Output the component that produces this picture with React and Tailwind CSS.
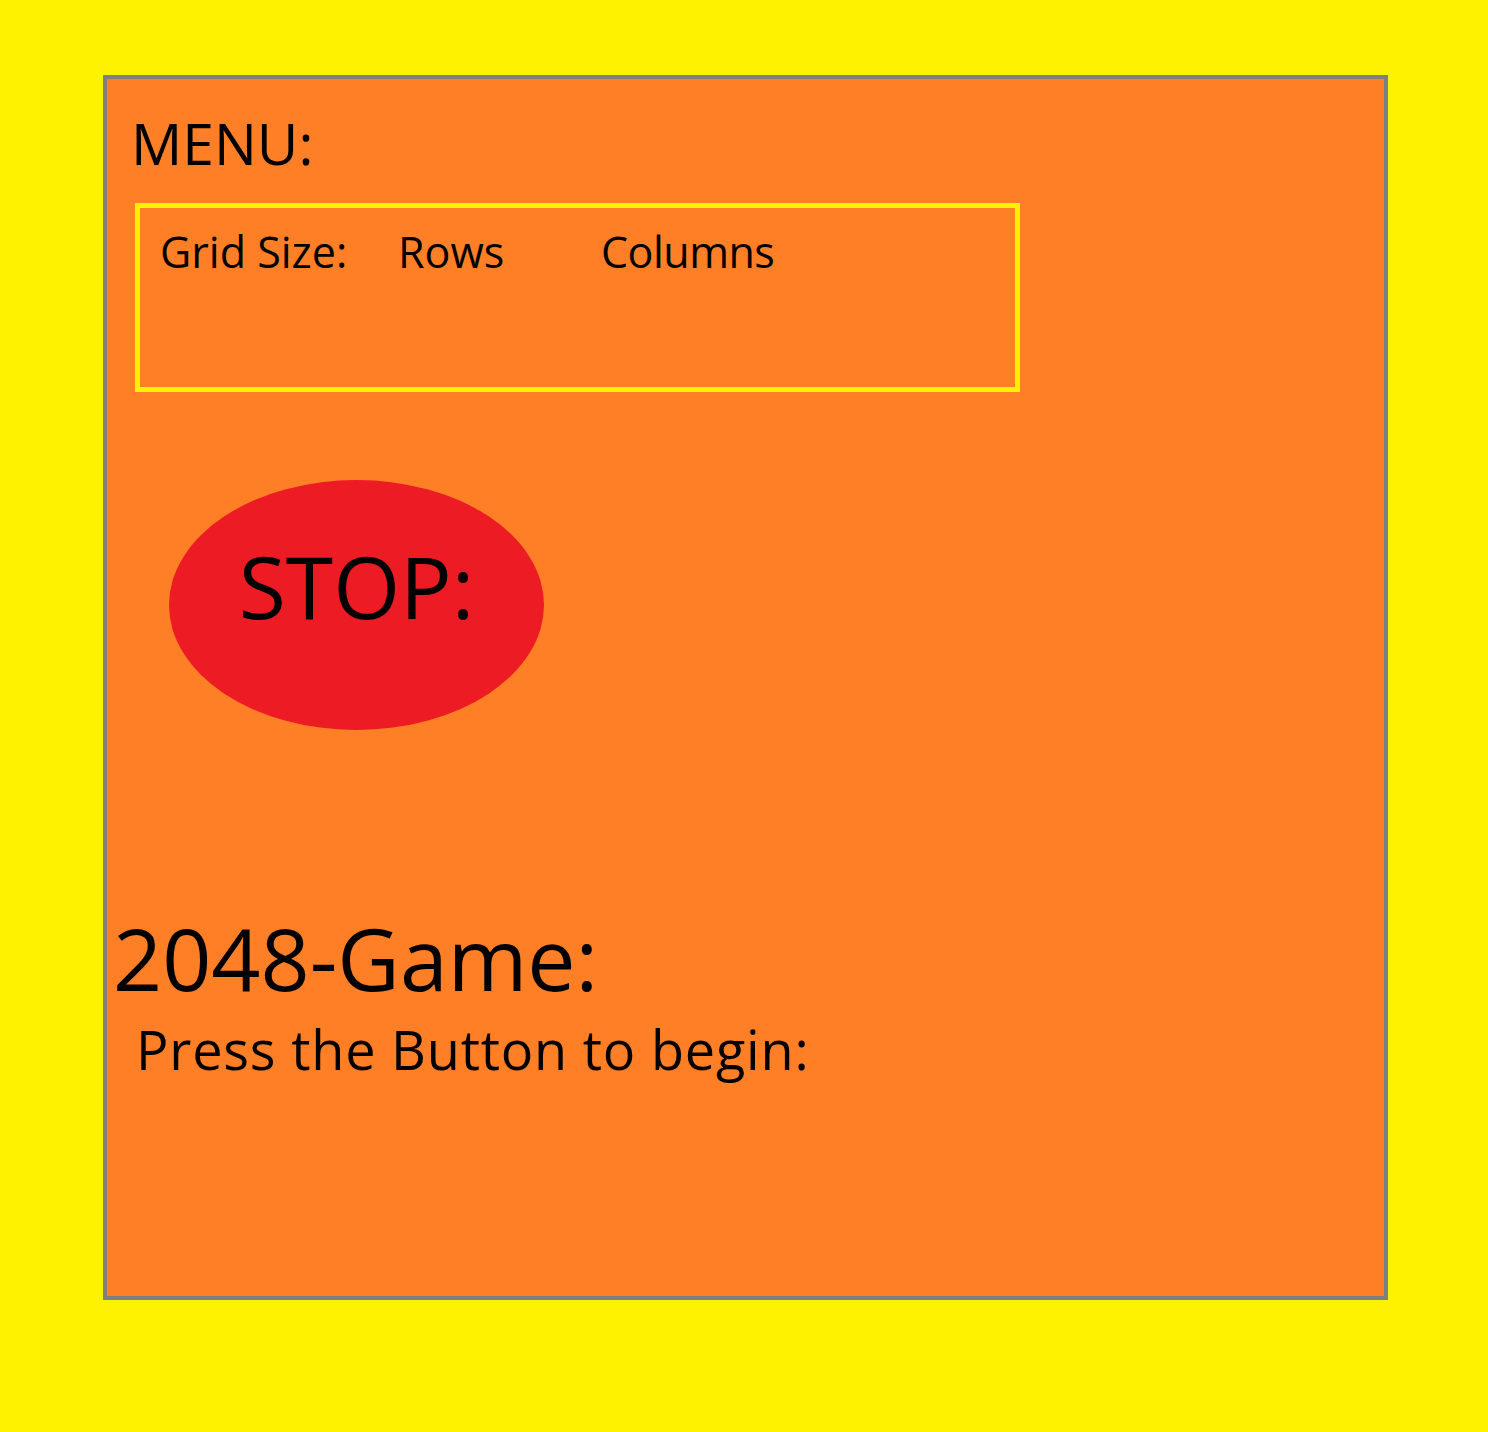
export default function App() {
  const font = { fontFamily: '"Open Sans", Lato, sans-serif' };
  return (
    <div className="w-[1488px] h-[1432px] bg-[#fff200] pl-[103px] pt-[75px]" style={font}>
      <div className="w-[1285px] h-[1225px] border-4 border-[#7f7f7f] bg-[#ff7f27] flex flex-col items-start text-black">
        <div className="mt-[36px] ml-[24px] text-[57px] leading-none">MENU:</div>
        <div className="mt-[31px] ml-[28px] w-[885px] h-[189px] border-[5px] border-[#fff200] pt-[22px] pl-[20px] flex text-[43px] leading-none">
          <span className="w-[238px]">Grid Size:</span>
          <span className="w-[203px]">Rows</span>
          <span className="tracking-[-0.5px]">Columns</span>
        </div>
        <div className="mt-[88px] ml-[62px] w-[375px] h-[250px] rounded-[50%] bg-[#ed1c24] flex flex-col items-center pt-[63px]">
          <span className="text-[86px] leading-none">STOP:</span>
        </div>
        <div className="mt-[185px] ml-[6px] text-[86px] leading-none">2048-Game:</div>
        <div className="mt-[21px] ml-[29px] text-[54px] leading-none tracking-[0.8px]">Press the Button to begin:</div>
      </div>
    </div>
  );
}
